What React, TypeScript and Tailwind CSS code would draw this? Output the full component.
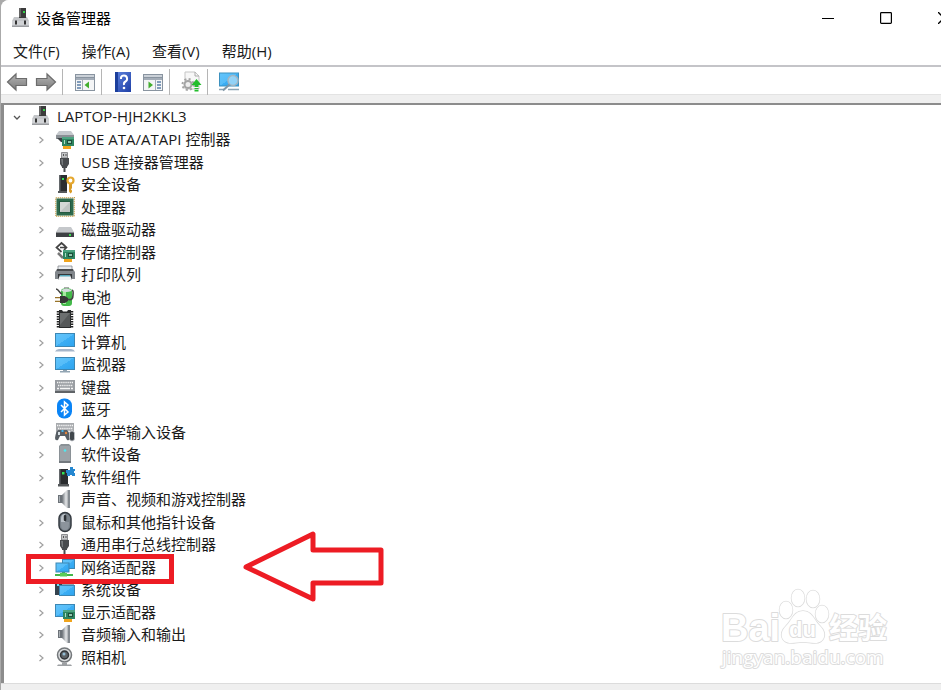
import React from 'react';

type IconProps = { children: React.ReactNode; className?: string };

const Icon: React.FC<IconProps> = ({ children, className = 'size-5' }) => (
  <svg viewBox="0 0 20 20" className={`${className} shrink-0 overflow-visible`} aria-hidden="true">
    {children}
  </svg>
);

const Defs = () => (
  <svg className="absolute size-0" aria-hidden="true">
    <defs>
      <linearGradient id="screen" x1="0" y1="0" x2="1" y2="1">
        <stop offset="0" stopColor="#62c4fb" />
        <stop offset="0.5" stopColor="#55bcf8" />
        <stop offset="0.5" stopColor="#3caef4" />
        <stop offset="1" stopColor="#2ea4ef" />
      </linearGradient>
      <linearGradient id="cone" x1="0" y1="0" x2="1" y2="0">
        <stop offset="0" stopColor="#6a7076" />
        <stop offset="0.5" stopColor="#e4e6e8" />
        <stop offset="1" stopColor="#70767c" />
      </linearGradient>
      <linearGradient id="arrow" x1="0" y1="0" x2="0" y2="1">
        <stop offset="0" stopColor="#b4b4b4" />
        <stop offset="1" stopColor="#7c7c7c" />
      </linearGradient>
      <linearGradient id="help" x1="0" y1="0" x2="1" y2="1">
        <stop offset="0" stopColor="#5f83dd" />
        <stop offset="1" stopColor="#1e3fa6" />
      </linearGradient>
    </defs>
  </svg>
);

// Device node: small tower standing on a grey box
const HostIcon = () => (
  <Icon>
    <path d="M8 0h7v10H8z" fill="#3b3b3b" />
    <path d="M8 0h2v10H8z" fill="#666" />
    <path d="M12 3h2v2h-2z" fill="#35d24a" />
    <path d="M3 9h13l2 4v6H1v-6z" fill="#c3c5c8" />
    <path d="M8 9h7v1H8z" fill="#3b3b3b" />
    <path d="M1 13h17v6H1z" fill="#d0d2d5" />
    <path d="M1 17.500h17V19H1z" fill="#9b9da0" />
    <path d="M4 12.500h2v4H4zM13 12.500h2v4h-2z" fill="#333" />
  </Icon>
);

const Board = ({ x, y }: { x: number; y: number }) => (
  <g transform={`translate(${x} ${y})`}>
    <path d="M0 0h12v9H0z" fill="#2e8560" />
    <path d="M0 0h12v2H0z" fill="#4ea482" />
    <path d="M5 3h5v4H5z" fill="#1c4d3a" />
    <path d="M6 4h3v2H6z" fill="#8fc9ac" />
    <path d="M2 3h1v4H2z" fill="#a9dbc2" />
    <path d="M1 9h8v3H1z" fill="#f0a41c" />
  </g>
);

const IdeIcon = () => (
  <Icon>
    <path d="M4 2h12l3 4v4H1V6z" fill="#c4c8cc" />
    <path d="M1 6h18v4H1z" fill="#8b9095" />
    <path d="M2 9h7v4H6z" fill="#3b4044" />
    <Board x={7} y={8} />
  </Icon>
);

const UsbIcon = () => (
  <Icon>
    <path d="M6.500.5h6V6h-6z" fill="#c4c6c8" stroke="#77797b" strokeWidth=".8" />
    <path d="M8 2h1v2H8zM10.500 2h1v2h-1z" fill="#555" />
    <path d="M5 6h9v6l-2 3v1h-1.500v4h-2v-4H7v-1l-2-3z" fill="#484b4e" />
    <path d="M6 7h2v6H7z" fill="#777b7e" />
  </Icon>
);

const SecurityIcon = () => (
  <Icon>
    <path d="M4 1h8v17H4z" fill="#2b2d2f" />
    <path d="M4 1h1.500v17H4z" fill="#63676a" />
    <path d="M7 4h2v2H7z" fill="#30e253" />
    <path d="M3 17h9v2H3z" fill="#55585a" />
    <path d="M14 9.500v8l1.500 2 1.500-1.500v-1.500l-1-1 1-1.500V9.500z" fill="#d99b25" />
    <circle cx="15.500" cy="6.500" r="3" fill="none" stroke="#e5a830" strokeWidth="2.200" />
  </Icon>
);

const CpuIcon = () => (
  <Icon>
    <path d="M.75.75h18.500v18.500H.75z" fill="none" stroke="#c5a04d" strokeWidth="1.500" strokeDasharray="1 1" />
    <path d="M1.500 1.500h17v17h-17z" fill="#2d6a4d" />
    <path d="M4 4h12v12H4z" fill="#245940" />
    <path d="M5 5h10v10H5z" fill="#d4d7d6" />
    <path d="M15 5v10H5z" fill="#bfc4c3" />
  </Icon>
);

const DiskIcon = () => (
  <Icon>
    <path d="M4 8h12l3 5H1z" fill="#c5c8cb" />
    <path d="M1 13h18v5H1z" fill="#3e4144" />
    <path d="M1 13h18v1H1z" fill="#8b8e91" />
    <path d="M14 15h2v2h-2z" fill="#3ae04e" />
  </Icon>
);

const StorageIcon = () => (
  <Icon>
    <path d="M10 4 6.500 1 1.500 5.500l5 4.500M5 5.500h6M9 3l2.500 2.500L9 8" fill="none" stroke="#444" strokeWidth="1.700" />
    <path d="M3 11l5 5" stroke="#777" strokeWidth="2.500" />
    <Board x={8} y={8} />
  </Icon>
);

const PrinterIcon = () => (
  <Icon>
    <path d="M3 2h14v4H3z" fill="#e8ebee" stroke="#85898d" strokeWidth=".8" />
    <path d="M2 5h16l2 3v7H0V8z" fill="#81868b" />
    <path d="M2 5h16v2H2z" fill="#4a4d50" />
    <path d="M3 10h14v6H3z" fill="#33373a" />
    <path d="M5 11h10l2 5H3z" fill="#eef1f3" />
    <path d="M5 11h10v1.500H5z" fill="#55a7bb" />
  </Icon>
);

const BatteryIcon = () => (
  <Icon>
    <path d="M9 0h5v2H9z" fill="#aaa" />
    <rect x="6" y="1.500" width="11" height="17.500" rx="3" fill="#43b94a" />
    <path d="M8 3h3v14H8z" fill="#a6eaa0" />
    <path d="M6.500 4Q11 6 16.500 4V3Q11 0 6.500 3z" fill="#d5dade" />
    <path d="M1 2c3 0 3 4 6 5M12 12c5 2 6-1 6-4s1-4-1-5" fill="none" stroke="#444" strokeWidth="1.600" />
    <path d="M5 9h5l3 2v3l-3 2H5z" fill="#373737" />
    <path d="M0 10h5v1.300H0zM0 13.700h5V15H0z" fill="#987329" />
  </Icon>
);

const FirmwareIcon = () => (
  <Icon>
    <path d="M3 2v17M17 2v17" stroke="#222" strokeWidth="2.500" strokeDasharray="1.500 1" />
    <path d="M4 1h3l1 1.500h4L13 1h3v18H4z" fill="#292b2c" />
    <path d="M5 4h10v14H5z" fill="#555859" />
    <path d="M5 4h10L5 16z" fill="#6c6f70" />
  </Icon>
);

const ComputerIcon = () => (
  <Icon>
    <rect x=".5" y="1.500" width="19" height="13" fill="url(#screen)" stroke="#3c87b4" />
    <path d="M0 19.500q1-2.500 4-2.500h12q3 0 4 2.500z" fill="#a6b6ca" />
  </Icon>
);

const MonitorIcon = () => (
  <Icon>
    <rect x=".5" y="3.500" width="19" height="12" fill="url(#screen)" stroke="#3c87b4" />
    <path d="M8 16h4v1h3v1.500H5V17h3z" fill="#92a5b3" />
  </Icon>
);

const Keys = () => (
  <g stroke="#f6f6f6" strokeWidth="1.300">
    <path d="M2 5.500h16" strokeDasharray="1.300 .8" />
    <path d="M3 8.500h15" strokeDasharray="1.300 .8" />
    <path d="M2 11.500h2M5 11.500h10M16 11.500h2" />
  </g>
);

const KeyboardIcon = () => (
  <Icon>
    <path d="M0 3h20v12H0z" fill="#999da2" />
    <Keys />
    <path d="M0 14h20v2H0z" fill="#606468" />
  </Icon>
);

const BluetoothIcon = () => (
  <Icon>
    <rect x="2" y="-.5" width="15" height="20" rx="7" fill="#0a84f6" />
    <path d="M6 6l7 7-3.500 3V3L13 6l-7 7" fill="none" stroke="#fff" strokeWidth="1.500" />
  </Icon>
);

const HidIcon = () => (
  <Icon>
    <path d="M1 1h18v10H1z" fill="#a8abae" />
    <g transform="translate(0 -2)">
      <Keys />
    </g>
    <path d="M3 8h9q2 1 3 8 0 3-3 2l-2-4H5l-2 4q-3 1-3-2 1-7 3-8z" fill="#585f65" />
    <path d="M3 10h2v3H3z" fill="#d8e0e5" />
    <path d="M6.500 8h2v2h-2z" fill="#43b5ee" />
    <circle cx="11" cy="11" r="1.200" fill="#e4863b" />
    <rect x="14.500" y="9" width="5" height="10" rx="2.500" fill="#40464b" stroke="#c8ccd0" strokeWidth=".8" />
  </Icon>
);

const SoftwareDeviceIcon = () => (
  <Icon>
    <path d="M4 2l2-2h8l2 2v17H4z" fill="#8a9196" />
    <path d="M5 2h10v16H5z" fill="#9da3a8" />
    <path d="M4 17h12v2H4z" fill="#73797e" />
    <circle cx="10" cy="6.500" r="1.300" fill="#4fe8f0" />
  </Icon>
);

const ComponentIcon = () => (
  <Icon>
    <path d="M4 2h9v16H4z" fill="#2b2d2f" />
    <path d="M4 2h1.500v16H4z" fill="#63676a" />
    <path d="M3 17h11v2.500H3z" fill="#55585a" />
    <path d="M7 5h2.500v2.500H7z" fill="#30e253" />
    <path d="M15 0h3v2h2v2h-1v2h1v3h-3V8h-2v1h-3V6h-1V3h4z" fill="#2688d1" />
  </Icon>
);

const SpeakerIcon = () => (
  <Icon>
    <path d="M3 6h5v8H3z" fill="#6c7278" />
    <path d="M7 6l5-5h3v18h-3l-5-5z" fill="url(#cone)" />
    <path d="M13 1h2v18h-2z" fill="#858b91" />
    <path d="M4 7h1v6H4z" fill="#a9afb4" />
  </Icon>
);

const MouseIcon = () => (
  <Icon>
    <rect x="4" y=".5" width="12" height="19" rx="6" fill="#778088" stroke="#343a40" strokeWidth="1.500" />
    <path d="M6 7q0-5 4-5v8H6z" fill="#bcc3ca" />
    <path d="M6 10h8v2q0 6-4 6t-4-6z" fill="#8c949c" />
    <rect x="8.800" y="3" width="2.500" height="6" rx="1" fill="#2c3034" />
  </Icon>
);

const NetworkIcon = () => (
  <Icon>
    <rect x="7.500" y="2.500" width="12" height="9" fill="url(#screen)" stroke="#3c87b4" />
    <path d="M7 15h3v2h8v2H0v-2h7z" fill="#43b649" />
    <path d="M5 16h7v3.500H5z" fill="#5bcd58" />
    <rect x="1" y="6" width="13" height="9" fill="url(#screen)" stroke="#3c87b4" />
  </Icon>
);

const SystemIcon = () => (
  <Icon>
    <path d="M0 3h7v13H0z" fill="#34434f" />
    <path d="M7 3h12v3H7z" fill="#8fa2b1" />
    <path d="M2 5h2v2H2z" fill="#68dff1" />
    <rect x="4.500" y="6.500" width="15" height="10" fill="url(#screen)" stroke="#3c87b4" />
  </Icon>
);

const DisplayIcon = () => (
  <Icon>
    <rect x=".5" y="2.500" width="19" height="12" fill="url(#screen)" stroke="#3c87b4" />
    <Board x={8} y={8} />
  </Icon>
);

const CameraIcon = () => (
  <Icon>
    <circle cx="9.500" cy="8" r="7" fill="#d9dbdd" stroke="#74787b" strokeWidth="1.500" />
    <circle cx="9.500" cy="8" r="4" fill="#5e6367" stroke="#303437" strokeWidth="1.500" />
    <circle cx="9" cy="7" r="1.500" fill="#93bdd4" />
    <path d="M7 15.500h5v2h4l1 1.500H2l1-1.500h4z" fill="#9da0a3" />
  </Icon>
);

const devices: { label: string; icon: React.FC }[] = [
  { label: 'IDE ATA/ATAPI 控制器', icon: IdeIcon },
  { label: 'USB 连接器管理器', icon: UsbIcon },
  { label: '安全设备', icon: SecurityIcon },
  { label: '处理器', icon: CpuIcon },
  { label: '磁盘驱动器', icon: DiskIcon },
  { label: '存储控制器', icon: StorageIcon },
  { label: '打印队列', icon: PrinterIcon },
  { label: '电池', icon: BatteryIcon },
  { label: '固件', icon: FirmwareIcon },
  { label: '计算机', icon: ComputerIcon },
  { label: '监视器', icon: MonitorIcon },
  { label: '键盘', icon: KeyboardIcon },
  { label: '蓝牙', icon: BluetoothIcon },
  { label: '人体学输入设备', icon: HidIcon },
  { label: '软件设备', icon: SoftwareDeviceIcon },
  { label: '软件组件', icon: ComponentIcon },
  { label: '声音、视频和游戏控制器', icon: SpeakerIcon },
  { label: '鼠标和其他指针设备', icon: MouseIcon },
  { label: '通用串行总线控制器', icon: UsbIcon },
  { label: '网络适配器', icon: NetworkIcon },
  { label: '系统设备', icon: SystemIcon },
  { label: '显示适配器', icon: DisplayIcon },
  { label: '音频输入和输出', icon: SpeakerIcon },
  { label: '照相机', icon: CameraIcon },
];

const TitleBar = () => (
  <header className="flex h-9 items-center overflow-hidden pl-2.5">
    <HostIcon />
    <h1 className="ml-[5px] flex-1 text-black">设备管理器</h1>
    <div className="-mr-8 flex h-full">
      <button aria-label="最小化" className="grid w-[58px] place-items-center">
        <svg viewBox="0 0 12 12" className="size-3"><path d="M0 6.500h12" stroke="#000" /></svg>
      </button>
      <button aria-label="最大化" className="grid w-[58px] place-items-center">
        <svg viewBox="0 0 12 12" className="size-3"><rect x=".6" y=".6" width="10.800" height="10.800" rx=".8" fill="none" stroke="#000" strokeWidth="1.200" /></svg>
      </button>
      <button aria-label="关闭" className="grid w-[58px] place-items-center">
        <svg viewBox="0 0 12 12" className="size-3"><path d="M0 0l12 12M12 0L0 12" stroke="#000" strokeWidth="1.300" /></svg>
      </button>
    </div>
  </header>
);

const PanelFrame = () => (
  <>
    <path d="M0 2h20v17H0z" fill="#8994a0" />
    <path d="M1 3h18v2H1z" fill="#cbd1d8" />
    <path d="M1 6h18v2H1z" fill="#a4adb8" />
    <path d="M1 8h18v10H1z" fill="#f4f5f6" />
  </>
);

const Separator = () => <span className="h-[26px] w-px bg-[#b5b5b5]" />;

const ToolBar = () => (
  <div role="toolbar" className="flex h-7 items-center border-b border-[#e3e3e3] pt-0.5 pl-1.5">
    <button aria-label="后退">
      <Icon><path d="M.5 10 9 2v4.500h10.500v7H9V18z" fill="url(#arrow)" stroke="#6c6c6c" strokeWidth="1.200" /></Icon>
    </button>
    <button aria-label="前进" className="mr-1.5 ml-[9px]">
      <Icon><path d="M19.500 10 11 2v4.500H.5v7H11V18z" fill="url(#arrow)" stroke="#6c6c6c" strokeWidth="1.200" /></Icon>
    </button>
    <Separator />
    <button aria-label="显示/隐藏控制台树" className="mr-1.5 ml-3">
      <Icon>
        <PanelFrame />
        <path d="M2 10h4M2 13h4M2 16h4" stroke="#5b7fa8" strokeWidth="1.500" />
        <path d="M7.500 8v10" stroke="#a4adb8" />
        <path d="M14 9.500v7L9.500 13z" fill="#42ae2e" />
      </Icon>
    </button>
    <Separator />
    <button aria-label="帮助" className="mr-2.5 ml-[11px]">
      <Icon>
        <path d="M2 0h16v20H2z" fill="url(#help)" />
        <path d="M2 0h3v20H2z" fill="#1c3f9c" />
        <path d="M8 7V5.500Q8.500 3.500 11 3.500t3 2.500-1.500 3.500T11 13" fill="none" stroke="#fff" strokeWidth="2" />
        <circle cx="11" cy="16" r="1.300" fill="#fff" />
      </Icon>
    </button>
    <button aria-label="显示/隐藏操作窗格" className="mr-1.5">
      <Icon>
        <PanelFrame />
        <path d="M14 10h4M14 13h4M14 16h4" stroke="#5b7fa8" strokeWidth="1.500" />
        <path d="M12.500 8v10" stroke="#a4adb8" />
        <path d="M5.500 9.500v7L10 13z" fill="#42ae2e" />
      </Icon>
    </button>
    <Separator />
    <button aria-label="扫描检测硬件改动" className="mr-1.5 ml-[11px]">
      <Icon>
        <path d="M4 0h10l4 4v13H4z" fill="#f7f7f7" stroke="#c5c5c5" />
        <path d="M14 0v4h4" fill="none" stroke="#aaa" />
        <circle cx="7" cy="12.500" r="3.500" fill="#eee" stroke="#a4a4a4" strokeWidth="2" />
        <circle cx="7" cy="12.500" r="5.500" fill="none" stroke="#a4a4a4" strokeWidth="2" strokeDasharray="2 2.320" />
        <path d="M15.500 7l5 6h-3v2h-4v-2h-3zM13.500 16h4v1.300h-4zM13.500 18h4v1.500h-4z" fill="#22bd2c" />
      </Icon>
    </button>
    <Separator />
    <button aria-label="显示设备" className="ml-[11px]">
      <Icon>
        <rect x=".5" y="1" width="19" height="13" fill="url(#screen)" stroke="#3d91bf" />
        <path d="M0 17.500h5M9 17.500h11" stroke="#8ca5b5" strokeWidth="1.500" />
        <circle cx="14" cy="8.500" r="5" fill="#a9dcf8" fillOpacity=".8" stroke="#a3b5c1" strokeWidth="1.500" />
        <path d="M10.500 12.500 4 18.500" stroke="#8096a5" strokeWidth="2" />
      </Icon>
    </button>
  </div>
);

const DeviceTree = () => (
  <ul role="tree" className="pb-3.5 text-[#1a1a1a]">
    <li role="treeitem" aria-expanded="true">
      <div className="flex h-[23px] items-center pb-0.5 pl-2">
        <svg viewBox="0 0 10 10" className="size-2.5 shrink-0"><path d="M2 5 5 8l3-3" fill="none" stroke="#555" strokeWidth="1.300" /></svg>
        <span className="ml-[9px]"><HostIcon /></span>
        <span className="ml-1.5">LAPTOP-HJH2KKL3</span>
      </div>
      <ul role="group">
        {devices.map(({ label, icon: DeviceIcon }) => (
          <li key={label} role="treeitem" aria-expanded="false" className="flex h-[22px] items-center pl-8 even:h-[23px]">
            <svg viewBox="0 0 10 10" className="size-2.5 shrink-0"><path d="M3.500 3 7 6 3.500 9" fill="none" stroke="#a0a0a0" strokeWidth="1.200" /></svg>
            <span className="ml-[9px]"><DeviceIcon /></span>
            <span className="ml-1.5">{label}</span>
          </li>
        ))}
      </ul>
    </li>
  </ul>
);

const Watermark = () => (
  <svg viewBox="0 0 180 90" className="absolute top-[585px] right-[46px] h-[90px] w-[180px]" fill="#fff" stroke="#dcdcdc" strokeWidth="2" paintOrder="stroke" strokeLinejoin="round">
    <text x="6" y="56" className="font-['Liberation_Sans',sans-serif] text-[38px] font-bold">Bai</text>
    <g strokeWidth="1.500">
      <ellipse cx="71" cy="25" rx="6.500" ry="8.500" />
      <ellipse cx="83" cy="13" rx="6.500" ry="8.500" />
      <ellipse cx="98" cy="14" rx="6.500" ry="8.500" />
      <ellipse cx="107" cy="29" rx="6.500" ry="8.500" />
      <path d="M88 26c9 0 11 9 17 15 8 8 4 17-5 17-5 0-7-1-12-1s-7 1-12 1c-9 0-13-9-5-17 6-6 8-15 17-15z" />
    </g>
    <text x="74" y="52" className="font-['Liberation_Sans',sans-serif] text-[22px] font-bold">du</text>
    <text x="114" y="54" className="font-['Noto_Sans_CJK_SC',sans-serif] text-[29px] font-bold">经验</text>
    <text x="7" y="79" className="font-['Open_Sans',sans-serif] text-[19px]">jingyan.baidu.com</text>
  </svg>
);

const App: React.FC = () => (
  <div className="relative flex min-h-screen flex-col overflow-hidden bg-[#aaa] pl-px font-['Open_Sans','Noto_Sans_CJK_SC',sans-serif] text-[15px] leading-5">
    <Defs />
    <div className="flex flex-1 flex-col rounded-tl-lg bg-[#efefef]">
      <div className="rounded-tl-lg bg-white">
        <TitleBar />
        <nav className="flex h-[29px] items-center gap-[22px] pl-3 text-[#1a1a1a]">
          <button>文件(F)</button>
          <button>操作(A)</button>
          <button>查看(V)</button>
          <button>帮助(H)</button>
        </nav>
        <div className="h-0.5 bg-[#c4c4c8]" />
        <ToolBar />
      </div>
      <main className="mt-2 flex-1 border-t-2 border-l-3 border-[#8c8c8c] bg-white">
        <DeviceTree />
      </main>
      <footer className="h-[7px] border-t border-[#dcdcdc]" />
    </div>

    {/* Highlight around the network adapter row and the arrow pointing at it */}
    <div className="absolute top-[554px] left-[26px] h-[30px] w-[148px] border-5 border-[#ed1c24]" />
    <svg viewBox="0 0 142 72" className="absolute top-[530px] left-[242px] h-[72px] w-[142px]">
      <path d="M4 37 71 4v16h68v33H71v16z" fill="none" stroke="#ed1c24" strokeWidth="5" strokeLinejoin="round" />
    </svg>
    <Watermark />
  </div>
);

export default App;
